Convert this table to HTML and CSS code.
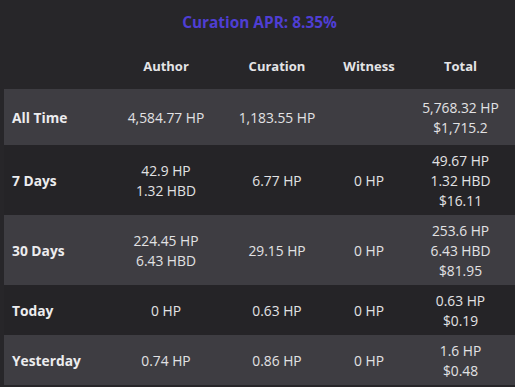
FILE: index.html
```html
<!DOCTYPE html>
<html>
<head>
<meta charset="utf-8">
<link rel="stylesheet" href="styles.css">
</head>
<body>
<div class="wrap">
  <div class="title">Curation APR: 8.35%</div>
  <table class="stats">
    <colgroup>
      <col class="c1"><col class="c2"><col class="c3"><col class="c4"><col class="c5">
    </colgroup>
    <thead>
      <tr><th></th><th>Author</th><th>Curation</th><th>Witness</th><th>Total</th></tr>
    </thead>
    <tbody>
      <tr class="alt tall">
        <td class="lbl">All Time</td>
        <td>4,584.77 HP</td>
        <td>1,183.55 HP</td>
        <td></td>
        <td>5,768.32 HP<br>$1,715.2</td>
      </tr>
      <tr>
        <td class="lbl">7 Days</td>
        <td>42.9 HP<br>1.32 HBD</td>
        <td>6.77 HP</td>
        <td>0 HP</td>
        <td>49.67 HP<br>1.32 HBD<br>$16.11</td>
      </tr>
      <tr class="alt">
        <td class="lbl">30 Days</td>
        <td>224.45 HP<br>6.43 HBD</td>
        <td>29.15 HP</td>
        <td>0 HP</td>
        <td>253.6 HP<br>6.43 HBD<br>$81.95</td>
      </tr>
      <tr>
        <td class="lbl">Today</td>
        <td>0 HP</td>
        <td>0.63 HP</td>
        <td>0 HP</td>
        <td>0.63 HP<br>$0.19</td>
      </tr>
      <tr class="alt">
        <td class="lbl">Yesterday</td>
        <td>0.74 HP</td>
        <td>0.86 HP</td>
        <td>0 HP</td>
        <td>1.6 HP<br>$0.48</td>
      </tr>
    </tbody>
  </table>
</div>
</body>
</html>
```

FILE: styles.css
```css
html, body {
  margin: 0;
  padding: 0;
  background: #272629;
  overflow: hidden;
}
body {
  font-family: "Open Sans", "Noto Sans", sans-serif;
  font-size: 13px;
  color: #e2e2e4;
}
.wrap {
  padding: 0 0 0 4px;
}
.title {
  width: 511px;
  text-align: center;
  color: #4f3ed3;
  font-weight: 700;
  font-size: 15.4px;
  line-height: 20px;
  padding-top: 13px;
}
.stats {
  width: 511px;
  border-collapse: collapse;
  table-layout: fixed;
  margin-top: 11px;
}
.c1 { width: 106px; }
.c2 { width: 112px; }
.c3 { width: 110px; }
.c4 { width: 74px; }
.c5 { width: 109px; }
.stats th {
  font-weight: 700;
  font-size: 13px;
  color: #e4e4e6;
  height: 43px;
  padding: 0 0 2px;
  text-align: center;
  vertical-align: middle;
  line-height: 20px;
}
.stats td {
  font-size: 13.8px;
  text-align: center;
  vertical-align: middle;
  line-height: 20px;
  padding: 6px 0 4px;
}
.stats td.lbl {
  text-align: left;
  padding-left: 8px;
  font-weight: 700;
  font-size: 13.8px;
  color: #ececee;
}
.stats tr td {
  background: #252427;
}
.stats tr.alt td {
  background: #3e3d42;
}
.stats tr.tall td {
  height: 46px;
}
```
